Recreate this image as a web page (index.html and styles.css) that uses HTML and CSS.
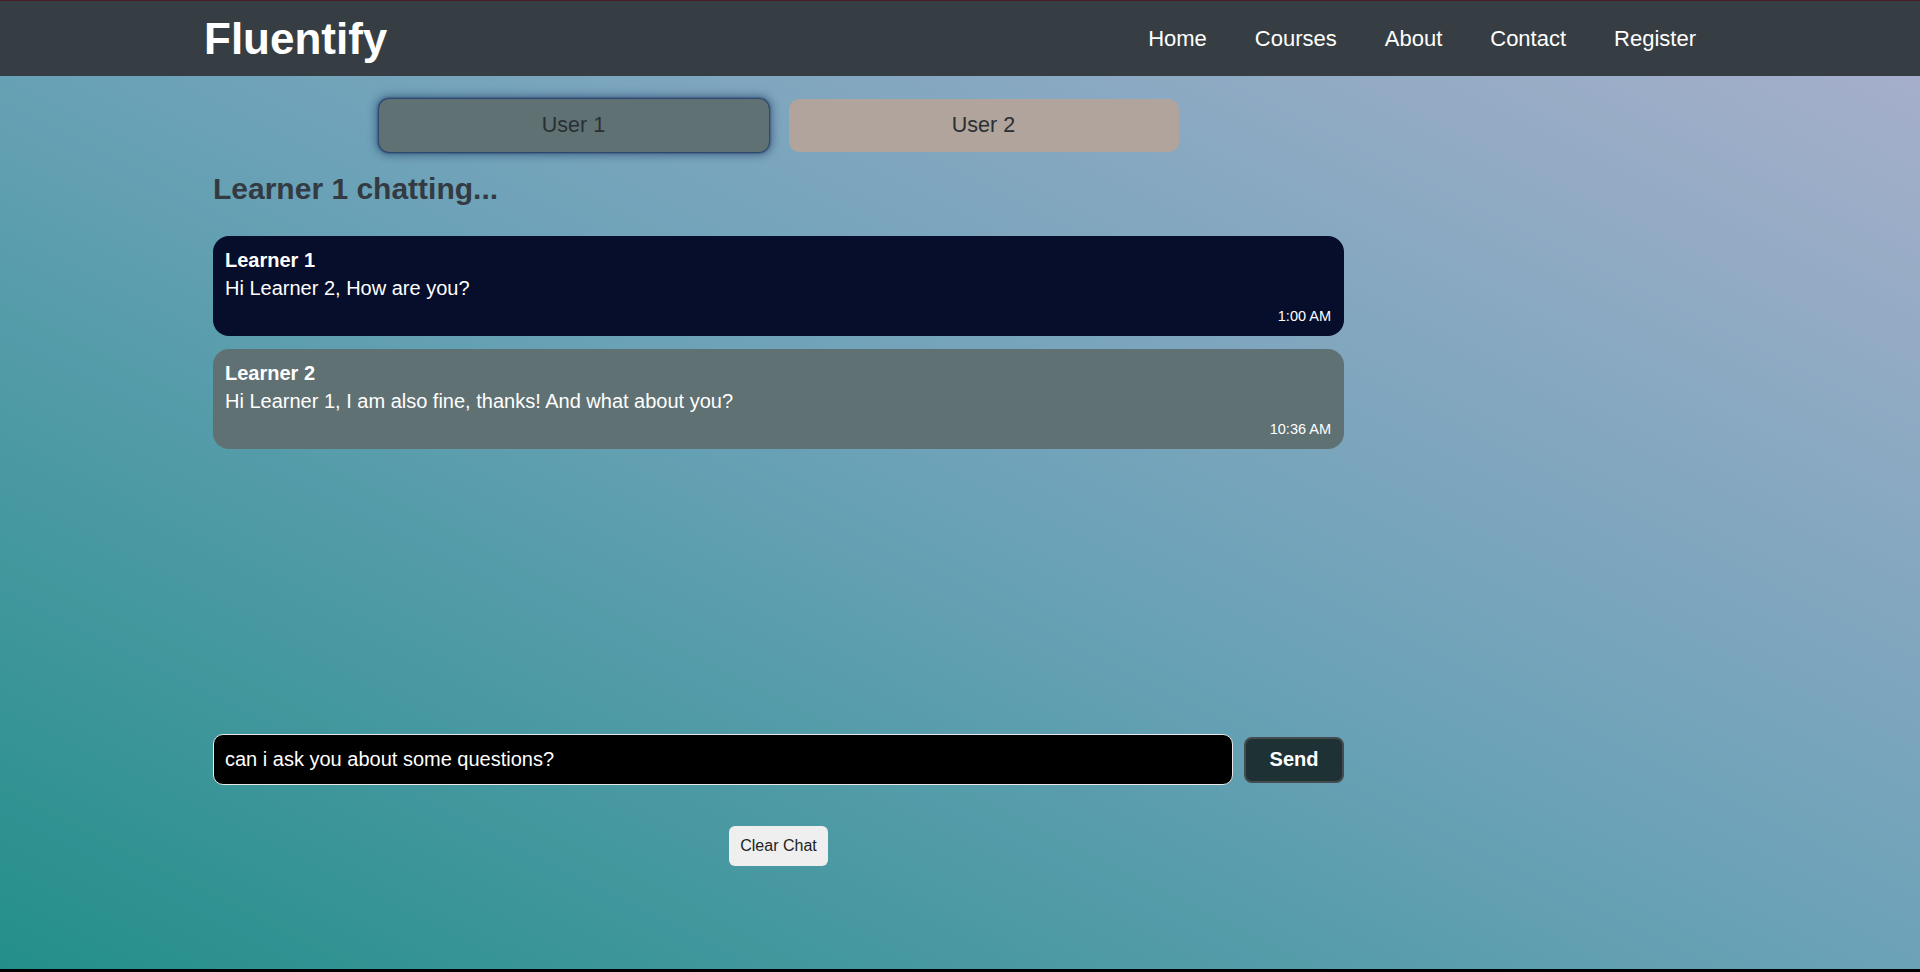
FILE: index.html
```html
<!DOCTYPE html>
<html lang="en">
<head>
<meta charset="utf-8">
<title>Fluentify - Chat</title>
<link rel="stylesheet" href="styles.css">
</head>
<body>
<div class="app">
  <header class="navbar">
    <div class="nav-inner">
      <a class="logo" href="#">Fluentify</a>
      <nav>
        <ul class="nav-links">
          <li><a href="#">Home</a></li>
          <li><a href="#">Courses</a></li>
          <li><a href="#">About</a></li>
          <li><a href="#">Contact</a></li>
          <li><a href="#">Register</a></li>
        </ul>
      </nav>
    </div>
  </header>
  <main class="main">
    <section class="chat">
      <div class="tabs">
        <button class="tab tab-active">User 1</button>
        <button class="tab tab-other">User 2</button>
      </div>
      <h2 class="chat-title">Learner 1 chatting...</h2>
      <div class="messages">
        <div class="msg msg-self">
          <div class="sender">Learner 1</div>
          <div class="text">Hi Learner 2, How are you?</div>
          <div class="time">1:00 AM</div>
        </div>
        <div class="msg msg-other">
          <div class="sender">Learner 2</div>
          <div class="text">Hi Learner 1, I am also fine, thanks! And what about you?</div>
          <div class="time">10:36 AM</div>
        </div>
      </div>
      <div class="composer">
        <input class="composer-input" type="text" value="can i ask you about some questions?">
        <button class="send">Send</button>
      </div>
      <div class="clear-row">
        <button class="clear">Clear Chat</button>
      </div>
    </section>
  </main>
</div>
</body>
</html>
```
FILE: styles.css
```css
html, body {
  margin: 0;
  padding: 0;
  background: #000;
}

body {
  font-family: "Liberation Sans", Arial, Helvetica, sans-serif;
  color: #fff;
}

.app {
  height: 969px;
  background: linear-gradient(to top right, #248f8a 0%, #6ca2b8 50%, #aab0cc 100%);
}

/* Navbar */
.navbar {
  height: 75px;
  background: #373e43;
  border-top: 1px solid #4a1c2a;
}

.nav-inner {
  width: 1520px;
  height: 100%;
  margin: 0 auto;
  display: flex;
  align-items: center;
  justify-content: space-between;
}

.logo {
  padding-left: 4px;
  font-size: 44px;
  font-weight: bold;
  color: #fff;
  text-decoration: none;
}

.nav-links {
  list-style: none;
  display: flex;
  margin: 0;
  padding: 0;
}

.nav-links a {
  display: block;
  padding: 0 24px;
  font-size: 22px;
  color: #fff;
  text-decoration: none;
}

/* Main */
.main {
  width: 1494px;
  margin: 0 auto;
}

.chat {
  width: 1131px;
}

.tabs {
  display: flex;
  justify-content: center;
  gap: 20px;
  padding-top: 23px;
}

.tab {
  width: 390px;
  height: 53px;
  border: none;
  border-radius: 10px;
  font-family: inherit;
  font-size: 21.5px;
  color: #2b2f33;
}

.tab-active {
  background: #5f7173;
  box-shadow: 0 0 2px 1px rgba(20, 40, 85, 0.8), 0 0 9px 3px rgba(20, 40, 85, 0.5);
}

.tab-other {
  background: #b0a49c;
}

.chat-title {
  margin: 20px 0 30px;
  font-size: 30px;
  line-height: 34px;
  font-weight: bold;
  color: #343a42;
}

.messages {
  height: 488px;
  display: flex;
  flex-direction: column;
  gap: 13px;
}

.msg {
  padding: 13px 13px 12px 12px;
  border-radius: 16px;
  color: #fff;
}

.msg-self {
  background: #070e2b;
}

.msg-other {
  background: #607173;
}

.sender {
  font-size: 20px;
  line-height: 22px;
  font-weight: bold;
}

.text {
  margin-top: 6px;
  font-size: 20px;
  line-height: 23px;
}

.time {
  margin-top: 8px;
  font-size: 14.5px;
  line-height: 16px;
  text-align: right;
}

.composer {
  margin-top: 10px;
  display: flex;
  align-items: center;
  gap: 11px;
}

.composer-input {
  flex: 1;
  box-sizing: border-box;
  height: 51px;
  padding: 0 11px;
  background: #000;
  color: #fff;
  border: 1px solid #e8e8e8;
  border-radius: 10px;
  font-family: inherit;
  font-size: 20px;
  outline: none;
}

.send {
  box-sizing: border-box;
  width: 100px;
  height: 46px;
  background: #1e3235;
  color: #fff;
  border: 2px solid #454c4e;
  border-radius: 8px;
  font-family: inherit;
  font-size: 20px;
  font-weight: bold;
}

.clear-row {
  margin-top: 41px;
  display: flex;
  justify-content: center;
}

.clear {
  padding: 11px 11px;
  background: #efefef;
  color: #222;
  border: none;
  border-radius: 6px;
  font-family: inherit;
  font-size: 16px;
}
```
